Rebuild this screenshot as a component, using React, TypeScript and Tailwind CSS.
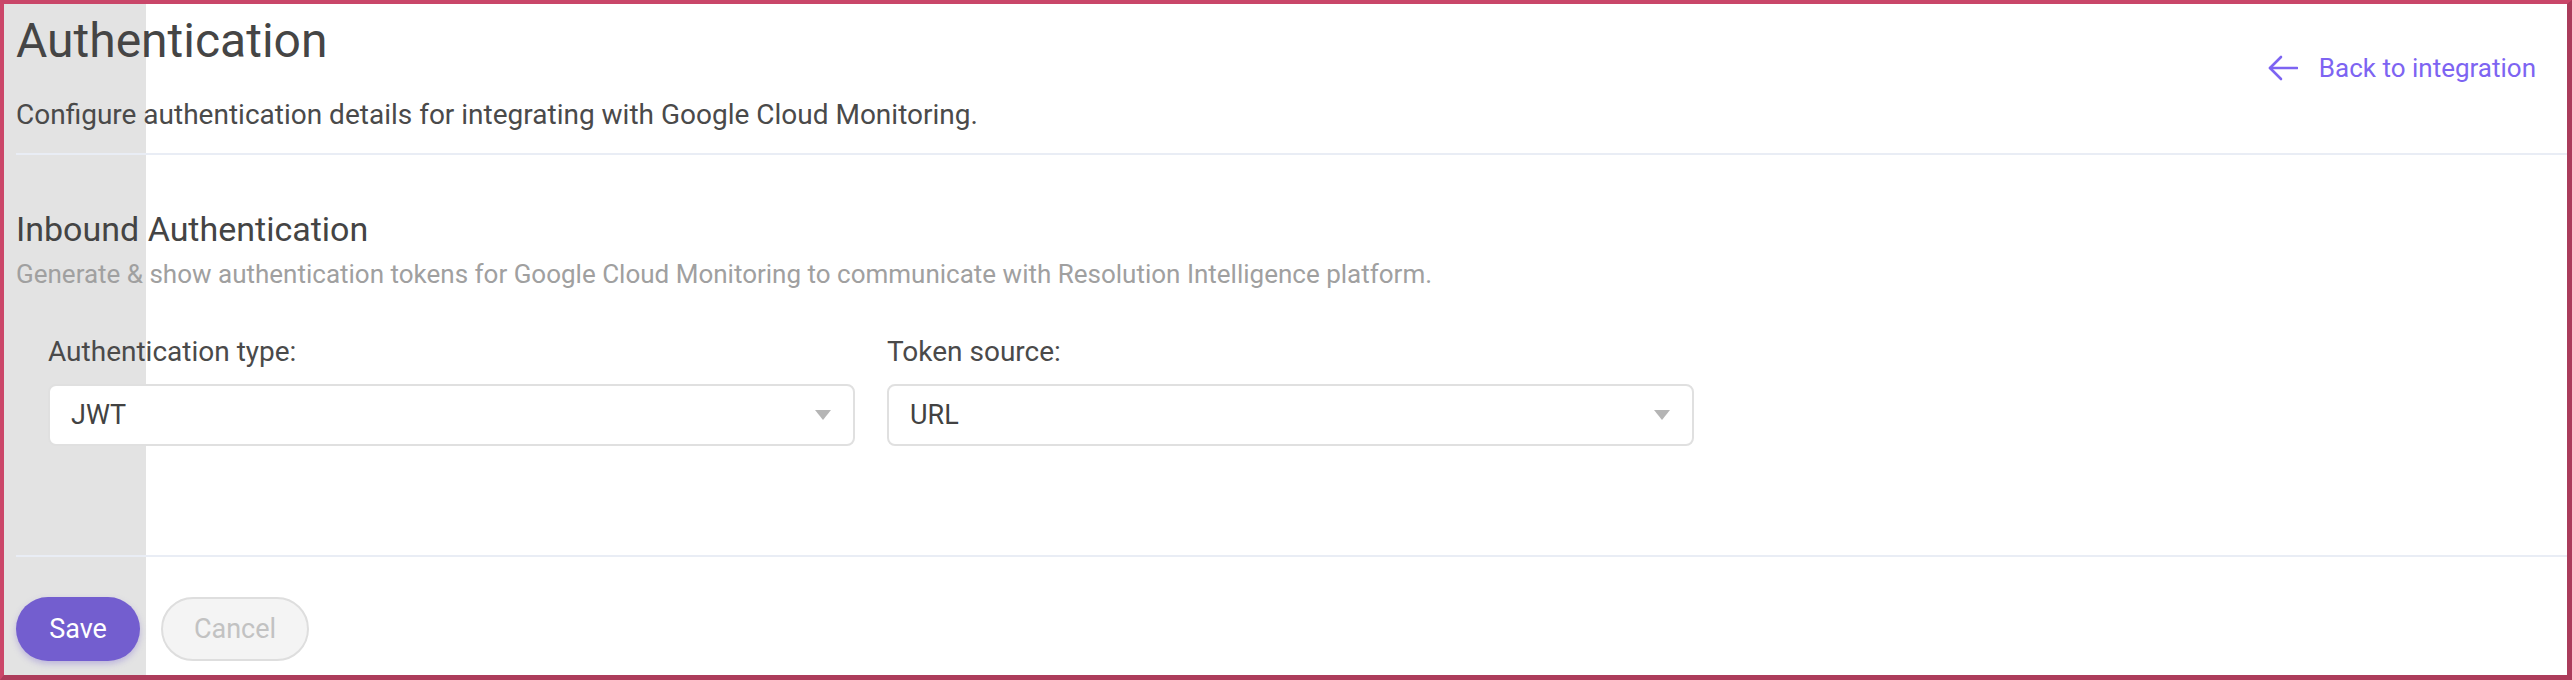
import React from 'react';

function ArrowLeft() {
  return (
    <svg width="30" height="26" viewBox="0 0 30 26" fill="none" stroke="currentColor" strokeWidth={2.6} strokeLinecap="round" strokeLinejoin="round">
      <path d="M29 13H2" />
      <path d="M13 2L2 13l11 11" />
    </svg>
  );
}

function SelectBox({ label, value }: { label: string; value: string }) {
  return (
    <div className="flex flex-col w-[807px]">
      <label className="text-[28px] leading-[28px] text-[#4a4a4a]">{label}</label>
      <div className="mt-[18px] h-[62px] rounded-[8px] border-2 border-[#e0e0e0] bg-white flex items-center justify-between pl-[21px] pr-[22px]">
        <span className="text-[27px] leading-[27px] text-[#424242]">{value}</span>
        <span className="w-0 h-0 border-l-[8px] border-r-[8px] border-t-[10px] border-l-transparent border-r-transparent border-t-[#b5b5b5]" />
      </div>
    </div>
  );
}

export default function App() {
  return (
    <div
      className="relative w-[2572px] h-[680px] bg-white border-l-4 border-t-4 border-r-[5px] border-b-[5px] border-l-[#cb4669] border-t-[#c94669] border-r-[#ab3c5b] border-b-[#ad3c5b] overflow-hidden"
      style={{ fontFamily: 'Roboto, "Liberation Sans", sans-serif' }}
    >
      {/* grey strip behind the left edge */}
      <div className="absolute left-0 top-0 bottom-0 w-[142px] bg-[#e3e3e3]" />

      <div className="relative flex flex-col h-full pl-[12px]">
        {/* header */}
        <div className="flex justify-between items-start pt-[13px]">
          <div className="flex flex-col">
            <h1 className="text-[48px] leading-[48px] text-[#454545] font-normal">Authentication</h1>
            <p className="mt-[36px] text-[28px] leading-[28px] text-[#4a4a4a]">
              Configure authentication details for integrating with Google Cloud Monitoring.
            </p>
          </div>
          <a className="mt-[38px] mr-[31px] flex items-center gap-[21px] text-[#7d64f2] text-[26px] leading-[26px] cursor-pointer">
            <ArrowLeft />
            <span>Back to integration</span>
          </a>
        </div>

        <div className="mt-[24px] h-[2px] bg-[#e9edf5]" />

        {/* inbound */}
        <h2 className="mt-[57px] text-[34px] leading-[34px] text-[#444444] font-normal">Inbound Authentication</h2>
        <p className="mt-[15px] text-[26px] leading-[26px] text-[#a0a0a0]">
          Generate &amp; show authentication tokens for Google Cloud Monitoring to communicate with Resolution Intelligence platform.
        </p>

        <div className="mt-[51px] pl-[32px] flex gap-[32px]">
          <SelectBox label="Authentication type:" value="JWT" />
          <SelectBox label="Token source:" value="URL" />
        </div>

        <div className="mt-[109px] h-[2px] bg-[#e9edf5]" />

        <div className="mt-[40px] flex gap-[21px]">
          <button className="w-[124px] h-[64px] rounded-full bg-[#735ecf] text-white text-[27px] shadow-[0_3px_6px_rgba(115,94,207,0.35)]">
            Save
          </button>
          <button className="w-[148px] h-[64px] rounded-full bg-[#f4f4f4] border-2 border-[#dedede] text-[#c2c2c2] text-[27px]">
            Cancel
          </button>
        </div>
      </div>
    </div>
  );
}
